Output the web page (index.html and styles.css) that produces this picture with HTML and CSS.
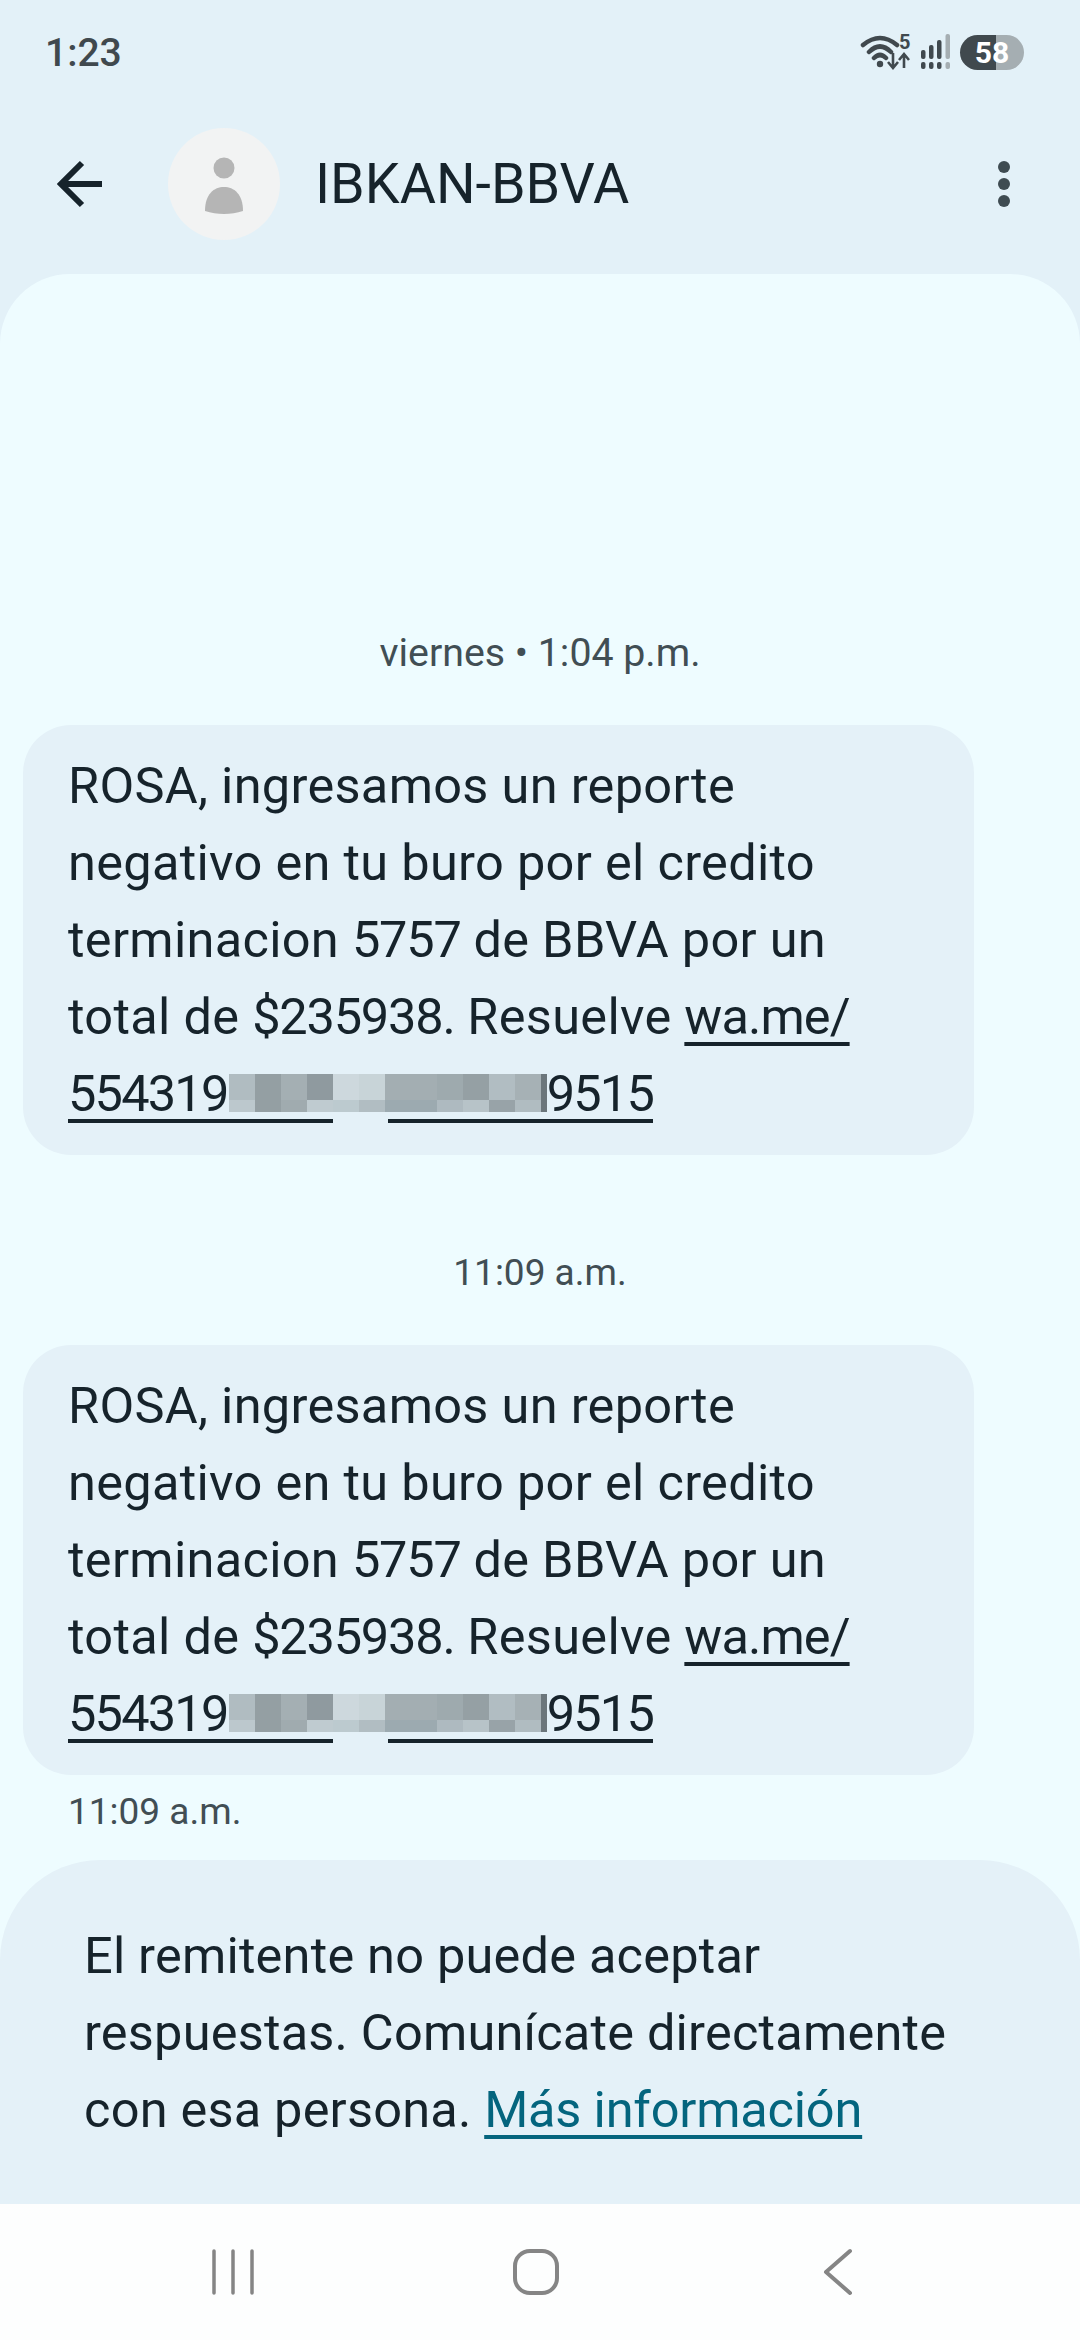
FILE: index.html
```html
<!DOCTYPE html>
<html lang="es">
<head>
    <meta charset="UTF-8">
    <meta name="viewport" content="width=device-width, initial-scale=1.0">
    <title>IBKAN-BBVA</title>
    <link rel="stylesheet" href="styles.css">
</head>
<body>
    <div class="pantalla">
        <div class="estado">
            <span class="hora">1:23</span>
            <div class="iconos">
                <svg class="wifi" width="52" height="36" viewBox="0 0 52 36">
                    <path d="M3 11 Q20 -3 37 11 M9 18 Q20 7 31 18 M14 24 Q20 18 26 24" fill="none" stroke="#40494e" stroke-width="4.5" stroke-linecap="round"/>
                    <circle cx="20" cy="30" r="3.2" fill="#40494e"/>
                    <text x="39" y="15" class="wifi-num">5</text>
                    <path d="M33 19 V33 M28 28 L33 34 L38 28 M44 34 V21 M39 26 L44 20 L49 26" fill="none" stroke="#40494e" stroke-width="2.6"/>
                </svg>
                <svg class="senal" width="32" height="36" viewBox="0 0 32 36">
                    <g fill="#40494e">
                        <rect x="1" y="16" width="4.5" height="9" rx="2"/>
                        <rect x="9" y="11" width="4.5" height="14" rx="2"/>
                        <rect x="17" y="6" width="4.5" height="19" rx="2"/>
                        <rect x="1" y="28" width="4.5" height="7" rx="2"/>
                        <rect x="9" y="28" width="4.5" height="7" rx="2"/>
                        <rect x="17" y="28" width="4.5" height="7" rx="2"/>
                    </g>
                    <g fill="#a5aeb2">
                        <rect x="25.5" y="0" width="4.5" height="25" rx="2"/>
                        <rect x="25.5" y="28" width="4.5" height="7" rx="2"/>
                    </g>
                </svg>
                <div class="bateria">58</div>
            </div>
        </div>

        <header class="barra">
            <svg class="volver" width="50" height="50" viewBox="0 0 50 50">
                <path d="M46 25 H5 M26 4 L5 25 L26 46" fill="none" stroke="#16232b" stroke-width="6"/>
            </svg>
            <div class="avatar">
                <svg width="112" height="112" viewBox="0 0 112 112">
                    <circle cx="56" cy="40" r="10.5" fill="#b5b5b5"/>
                    <path d="M37 83 C37 66 46 59 56 59 C66 59 75 66 75 83 C63 87 49 87 37 83 Z" fill="#b5b5b5"/>
                </svg>
            </div>
            <h1 class="titulo">IBKAN-BBVA</h1>
            <div class="puntos"><i></i><i></i><i></i></div>
        </header>

        <main class="chat">
            <p class="fecha fecha-primera">viernes • 1:04 p.m.</p>
            <div class="burbuja">
                ROSA, ingresamos un reporte negativo en tu buro por el credito terminacion <span class="num">5757</span> de BBVA por un total de <span class="num">$235938.</span> Resuelve <a class="enlace enlace-corto">wa.me/</a>
                <div class="oculto">
                    <a class="tramo">554319</a>
                    <a class="tramo tramo-fin">9515</a>
                    <span class="mosaico"></span>
                </div>
            </div>

            <p class="fecha">11:09 a.m.</p>
            <div class="burbuja">
                ROSA, ingresamos un reporte negativo en tu buro por el credito terminacion <span class="num">5757</span> de BBVA por un total de <span class="num">$235938.</span> Resuelve <a class="enlace enlace-corto">wa.me/</a>
                <div class="oculto">
                    <a class="tramo">554319</a>
                    <a class="tramo tramo-fin">9515</a>
                    <span class="mosaico"></span>
                </div>
            </div>
            <p class="hora-msg">11:09 a.m.</p>

            <div class="aviso">
                El remitente no puede aceptar respuestas. Comunícate directamente con esa persona. <a class="enlace enlace-azul">Más información</a>
            </div>
        </main>

        <nav class="navegacion">
            <svg width="44" height="46" viewBox="0 0 44 46">
                <path d="M3 2 V44 M22 2 V44 M41 2 V44" fill="none" stroke="#858585" stroke-width="3.5" stroke-linecap="round"/>
            </svg>
            <svg width="46" height="46" viewBox="0 0 46 46">
                <rect x="2" y="2" width="42" height="42" rx="15" fill="none" stroke="#858585" stroke-width="4"/>
            </svg>
            <svg class="nav-atras" width="32" height="48" viewBox="0 0 32 48">
                <path d="M28 3 L4 24 L28 45" fill="none" stroke="#858585" stroke-width="4" stroke-linecap="round" stroke-linejoin="round"/>
            </svg>
        </nav>
    </div>
</body>
</html>
```

FILE: styles.css
```css
* {
    box-sizing: border-box;
}
body {
    margin: 0;
    background: #e3f1f8;
    font-family: Roboto, "Liberation Sans", sans-serif;
    color: #16232b;
}
.pantalla {
    width: 1080px;
    height: 2340px;
    display: flex;
    flex-direction: column;
    overflow: hidden;
}

/* barra de estado */
.estado {
    height: 94px;
    padding: 10px 56px 0 45px;
    display: flex;
    align-items: center;
    justify-content: space-between;
    flex: none;
}
.hora {
    margin-top: 2px;
    font-size: 39px;
    font-weight: 500;
    color: #40494e;
}
.iconos {
    display: flex;
    align-items: center;
    gap: 8px;
}
.wifi-num {
    font-size: 20px;
    font-weight: 700;
    fill: #40494e;
}
.bateria {
    width: 64px;
    height: 35px;
    border-radius: 18px;
    background: linear-gradient(to right, #40494e 56%, #a5aeb2 56%);
    color: #fff;
    font-size: 30px;
    font-weight: 700;
    text-align: center;
    line-height: 35px;
}

/* cabecera */
.barra {
    height: 180px;
    padding-left: 56px;
    display: flex;
    align-items: center;
    flex: none;
}
.volver {
    flex: none;
}
.avatar {
    width: 112px;
    height: 112px;
    margin-left: 62px;
    border-radius: 50%;
    background: #f2f3f3;
    flex: none;
}
.titulo {
    margin: 0 0 0 35px;
    font-size: 55.6px;
    font-weight: 400;
}
.puntos {
    margin-left: auto;
    margin-right: 70px;
    display: flex;
    flex-direction: column;
    gap: 5px;
}
.puntos i {
    display: block;
    width: 12px;
    height: 12px;
    border-radius: 50%;
    background: #3f4c52;
}

/* conversacion */
.chat {
    flex: 1;
    background: #eefcff;
    border-radius: 70px 70px 0 0;
    display: flex;
    flex-direction: column;
    justify-content: flex-end;
}
.fecha {
    margin: 93px 0 47px;
    height: 50px;
    line-height: 50px;
    text-align: center;
    font-size: 37px;
    color: #414e54;
}
.fecha-primera {
    font-size: 39.3px;
}
.burbuja {
    width: 951px;
    margin-left: 23px;
    padding: 22px 60px 23px 45px;
    background: #e4f1f8;
    border-radius: 48px;
    font-size: 50.5px;
    line-height: 77px;
    letter-spacing: .3px;
}
.num {
    letter-spacing: -1.2px;
}
.enlace {
    text-decoration: underline;
    text-decoration-thickness: 4px;
    text-underline-offset: 8px;
    text-decoration-skip-ink: none;
}
.enlace-corto {
    letter-spacing: -.9px;
}
.enlace-azul {
    color: #04657e;
    letter-spacing: -.2px;
}
.oculto {
    position: relative;
    height: 77px;
    display: flex;
    align-items: flex-start;
    gap: 55px;
}
.tramo {
    width: 265px;
    height: 68px;
    line-height: 77px;
    letter-spacing: -1.8px;
    border-bottom: 4px solid #16232b;
}
.tramo-fin {
    text-align: right;
}
/* numero tapado */
.mosaico {
    position: absolute;
    left: 161px;
    top: 19px;
    width: 318px;
    height: 38px;
    background:
        linear-gradient(to right, #b0bcc1 26px, #949fa3 26px 52px, #a4afb3 52px 78px, #8f9a9f 78px 104px, #cdd8dd 104px 130px, #c8d4d8 130px 156px, #a3aeb2 156px 208px, #9eaaae 208px 234px, #95a0a4 234px 260px, #b1bdc2 260px 286px, #a6b1b5 286px 312px, #6b767b 312px) top / 100% 26px no-repeat,
        linear-gradient(to right, #bcc8cd 26px, #949fa3 26px 52px, #a0abaf 52px 78px, #bfcbd0 78px 104px, #bccacf 104px 130px, #b1bdc2 130px 156px, #9caab0 156px 208px, #aebac0 208px 234px, #b7c3c8 234px 260px, #98a3a8 260px 286px, #b0bcc1 286px 312px, #6b767b 312px) bottom / 100% 12px no-repeat;
}
.hora-msg {
    margin: 12px 0 23px 68px;
    height: 50px;
    line-height: 50px;
    font-size: 37px;
    color: #414e54;
}
.aviso {
    height: 344px;
    padding: 57px 100px 0 84px;
    background: #e4f1f8;
    border-radius: 100px 100px 0 0;
    font-size: 50.5px;
    line-height: 77px;
    letter-spacing: .2px;
}

/* navegacion */
.navegacion {
    height: 136px;
    flex: none;
    background: #fdfefe;
    display: flex;
    align-items: center;
    padding-left: 211px;
    gap: 258px;
}
.nav-atras {
    margin-left: 5px;
}
```
